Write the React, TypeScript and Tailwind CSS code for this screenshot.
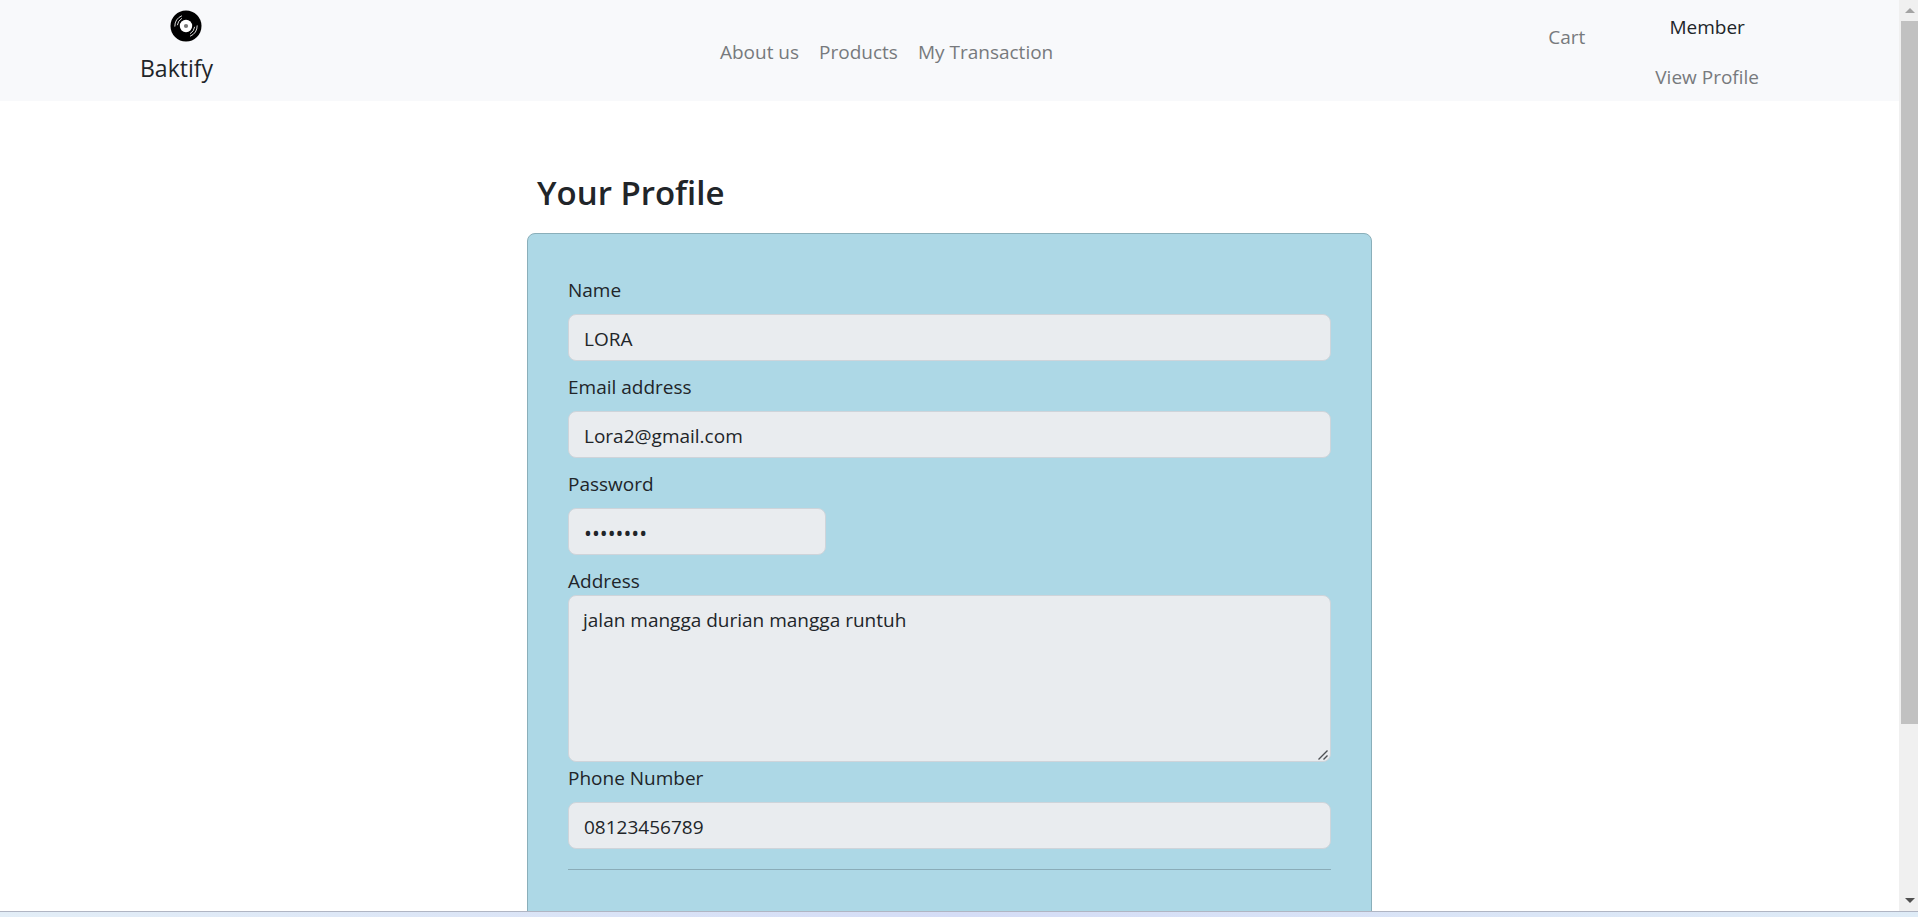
import React from "react";

const fieldClass =
  "block rounded-lg border border-[#ced4da] bg-[#e9ecef] text-[#212529] outline-none";

function Record() {
  return (
    <svg viewBox="0 0 32 32" className="ml-[30px] h-8 w-8" aria-hidden="true">
      <circle cx="16" cy="16" r="15.5" fill="#000" />
      <circle cx="16" cy="16" r="6.2" fill="#fff" />
      <circle cx="16" cy="16" r="2.1" fill="#777" />
      <g fill="none" stroke="#dcdcdc" strokeWidth="1" strokeLinecap="round">
        <path d="M4.8 16.2A11.2 11.2 0 0 1 11.6 5.9" />
        <path d="M7.4 14.8A8.7 8.7 0 0 1 11.6 8.5" />
        <path d="M27.2 15.8A11.2 11.2 0 0 1 20.4 26.1" />
        <path d="M24.6 17.2A8.7 8.7 0 0 1 20.4 23.5" />
      </g>
    </svg>
  );
}

function Header() {
  return (
    <header className="flex h-[101px] items-center justify-between bg-[#f8f9fb] px-[140px] pt-0.5 text-[19px] leading-[30px] text-[#777a7d]">
      <a href="#home" className="mr-3 flex flex-col items-start pb-2 text-[#212529]">
        <Record />
        <span className="mt-2 text-[23px] leading-[36px]">Baktify</span>
      </a>
      <nav className="flex gap-5">
        <a href="#about">About us</a>
        <a href="#products">Products</a>
        <a href="#transactions">My Transaction</a>
      </nav>
      <div className="flex gap-[70px]">
        <a href="#cart" className="pt-[10px]">Cart</a>
        <div className="flex flex-col items-center gap-5">
          <span className="text-[#212529]">Member</span>
          <a href="#profile">View Profile</a>
        </div>
      </div>
    </header>
  );
}

type FieldProps = { id: string; label: string; type: string; value: string; size: string };

function Field({ id, label, type, value, size }: FieldProps) {
  return (
    <div className="flex flex-col gap-[10px]">
      <label htmlFor={id} className="h-[30px] leading-[32px]">{label}</label>
      <input id={id} type={type} defaultValue={value} readOnly className={`${fieldClass} h-[47px] px-[15px] pt-0.5 ${size}`} />
    </div>
  );
}

function ScrollBar() {
  return (
    <div className="flex w-[19px] shrink-0 flex-col items-end bg-[#f0f0f0]" aria-hidden="true">
      <div className="flex h-[21px] w-[17px] shrink-0 items-center justify-center">
        <svg viewBox="0 0 10 5" className="h-[5px] w-[10px]"><path d="M0 5L5 0L10 5Z" fill="#a3a3a3" /></svg>
      </div>
      <div className="w-[17px] grow-[703] bg-[#c1c1c1]" />
      <div className="grow-[166]" />
      <div className="flex h-[21px] w-[17px] shrink-0 items-center justify-center">
        <svg viewBox="0 0 10 5" className="h-[5px] w-[10px]"><path d="M0 0L5 5L10 0Z" fill="#505050" /></svg>
      </div>
    </div>
  );
}

export default function App() {
  return (
    <div className="flex h-screen flex-col bg-white font-['Open_Sans',sans-serif] text-[19px] leading-[30px] text-[#212529]">
      <div className="flex min-h-0 flex-1">
        <div className="min-w-0 flex-1 overflow-hidden">
          <Header />
          <main className="mx-auto max-w-[845px] pt-[72px]">
            <h1 className="px-[10px] text-[33px] leading-[40px] font-semibold">Your Profile</h1>
            <form className="mt-5 rounded-lg border border-[#8aafba] bg-[#add8e6] px-10 pt-10 pb-20">
              <div className="flex flex-col gap-[10px]">
                <Field id="name" label="Name" type="text" value="LORA" size="w-full" />
                <Field id="email" label="Email address" type="email" value="Lora2@gmail.com" size="w-full" />
                <Field id="password" label="Password" type="password" value="password" size="w-[258px] text-[21px]" />
                <div>
                  <label htmlFor="address" className="block h-[30px] leading-[32px]">Address</label>
                  <div className="relative">
                    <textarea
                      id="address"
                      readOnly
                      defaultValue="jalan mangga durian mangga runtuh"
                      className={`${fieldClass} h-[167px] w-full resize-none px-[14px] pt-[9px]`}
                    />
                    <svg viewBox="0 0 10 10" className="pointer-events-none absolute right-[3px] bottom-0.5 h-[10px] w-[10px]" aria-hidden="true">
                      <path d="M0.5 9.5L9.5 0.5M5.5 9.5L9.5 5.5" fill="none" stroke="#4d5054" strokeWidth="1.4" />
                    </svg>
                  </div>
                  <Field id="phone" label="Phone Number" type="tel" value="08123456789" size="w-full" />
                </div>
              </div>
              <hr className="mt-5 border-[#8aacb8]" />
            </form>
          </main>
        </div>
        <ScrollBar />
      </div>
      <div className="h-[6px] shrink-0 border-t border-[#b0b5c3] bg-linear-to-r from-[#e3eef7] via-[#d5ddf6] to-[#dfecf7]" />
    </div>
  );
}
